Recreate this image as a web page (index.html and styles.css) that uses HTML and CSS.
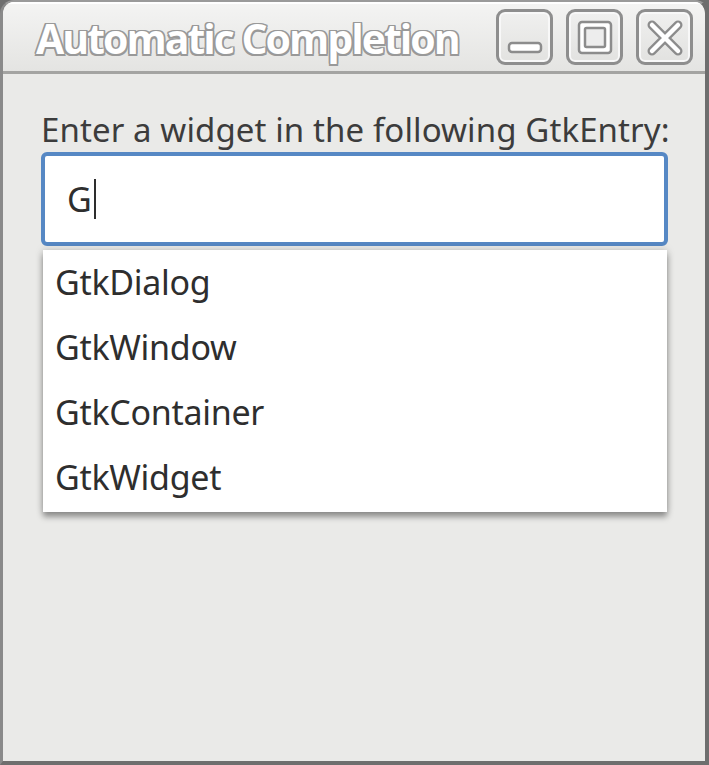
FILE: index.html
```html
<!DOCTYPE html>
<html>
<head>
<meta charset="utf-8">
<link rel="stylesheet" href="styles.css">
</head>
<body>
<div class="window">
  <div class="titlebar">
    <div class="title">Automatic Completion</div>
    <div class="buttons">
      <div class="wbtn">
        <svg width="40" height="40" viewBox="0 0 40 40"><rect x="4" y="26" width="32" height="9" rx="3" fill="#fff" stroke="#8c8c8c" stroke-width="2.5"/></svg>
      </div>
      <div class="wbtn">
        <svg width="40" height="40" viewBox="0 0 40 40"><rect x="4" y="5" width="32" height="31" rx="3" fill="#fff" stroke="#8c8c8c" stroke-width="2.5"/><rect x="10" y="11" width="20" height="19" rx="1.5" fill="#ededed" stroke="#8c8c8c" stroke-width="2.5"/></svg>
      </div>
      <div class="wbtn">
        <svg width="40" height="40" viewBox="0 0 40 40"><path d="M7 8 L33 34 M33 8 L7 34" stroke="#8c8c8c" stroke-width="9" stroke-linecap="round"/><path d="M7 8 L33 34 M33 8 L7 34" stroke="#fff" stroke-width="4.5" stroke-linecap="round"/></svg>
      </div>
    </div>
  </div>
  <div class="content">
    <div class="label">Enter a widget in the following GtkEntry:</div>
    <div class="entry"><span class="typed">G</span><span class="caret"></span></div>
    <div class="popup">
      <div class="item">GtkDialog</div>
      <div class="item">GtkWindow</div>
      <div class="item">GtkContainer</div>
      <div class="item">GtkWidget</div>
    </div>
  </div>
</div>
</body>
</html>
```
FILE: styles.css
```css
html, body {
  margin: 0;
  padding: 0;
  background: #6e6e6e;
}
.window {
  width: 709px;
  height: 765px;
  box-sizing: border-box;
  background: #eaeae8;
  border-left: 3px solid #8a8a8a;
  border-right: 4px solid #6e6e6e;
  border-bottom: 4px solid #6e6e6e;
  border-top: 2px solid #9a9a9a;
  border-top-left-radius: 14px;
  border-top-right-radius: 14px;
  display: flex;
  flex-direction: column;
  font-family: "Noto Sans", "Open Sans", sans-serif;
  overflow: hidden;
}
.titlebar {
  height: 72px;
  flex: none;
  box-sizing: border-box;
  display: flex;
  align-items: center;
  justify-content: space-between;
  padding: 0 12px 0 33px;
  background: linear-gradient(#f4f4f3, #e4e4e2);
  border-bottom: 3px solid #a4a4a2;
  box-shadow: inset 0 2px 0 #ffffff;
}
.title {
  font-family: "Open Sans", "Noto Sans", sans-serif;
  font-weight: 700;
  font-size: 41px;
  color: #ffffff;
  letter-spacing: -2px;
  text-shadow: -1.5px 0 #999, 1.5px 0 #999, 0 -1.5px #999, 0 1.5px #999, 1.5px 1.5px #999, -1.5px -1.5px #999, 1.5px -1.5px #999, -1.5px 1.5px #999;
  padding-top: 2px;
}
.buttons {
  display: flex;
  gap: 13px;
}
.wbtn {
  width: 57px;
  height: 56px;
  box-sizing: border-box;
  border: 3px solid #8e8e8e;
  border-radius: 9px;
  background: linear-gradient(#f0f0ef, #e2e2e0);
  box-shadow: inset 0 0 0 2px #f8f8f8;
  display: flex;
  align-items: center;
  justify-content: center;
}
.content {
  padding: 36px 37px 0 38px;
  display: flex;
  flex-direction: column;
}
.label {
  font-size: 33px;
  color: #3c3c3c;
  line-height: 40px;
  white-space: nowrap;
  letter-spacing: 0.1px;
}
.entry {
  margin-top: 2px;
  height: 94px;
  box-sizing: border-box;
  border: 4px solid #5688c4;
  border-radius: 6px;
  background: #ffffff;
  display: flex;
  align-items: center;
  padding-left: 22px;
}
.typed {
  font-size: 34px;
  color: #2e2e2e;
}
.caret {
  width: 2px;
  height: 40px;
  background: #2e2e2e;
  margin-left: 2px;
}
.popup {
  margin: 4px 1px 0 2px;
  background: #ffffff;
  box-shadow: 0 5px 6px rgba(0,0,0,0.35), 0 0 8px rgba(0,0,0,0.18);
  padding: 0 0 2px 0;
}
.item {
  height: 65px;
  line-height: 64px;
  padding-left: 12px;
  font-size: 34px;
  letter-spacing: -0.3px;
  color: #2e2e2e;
}
```
